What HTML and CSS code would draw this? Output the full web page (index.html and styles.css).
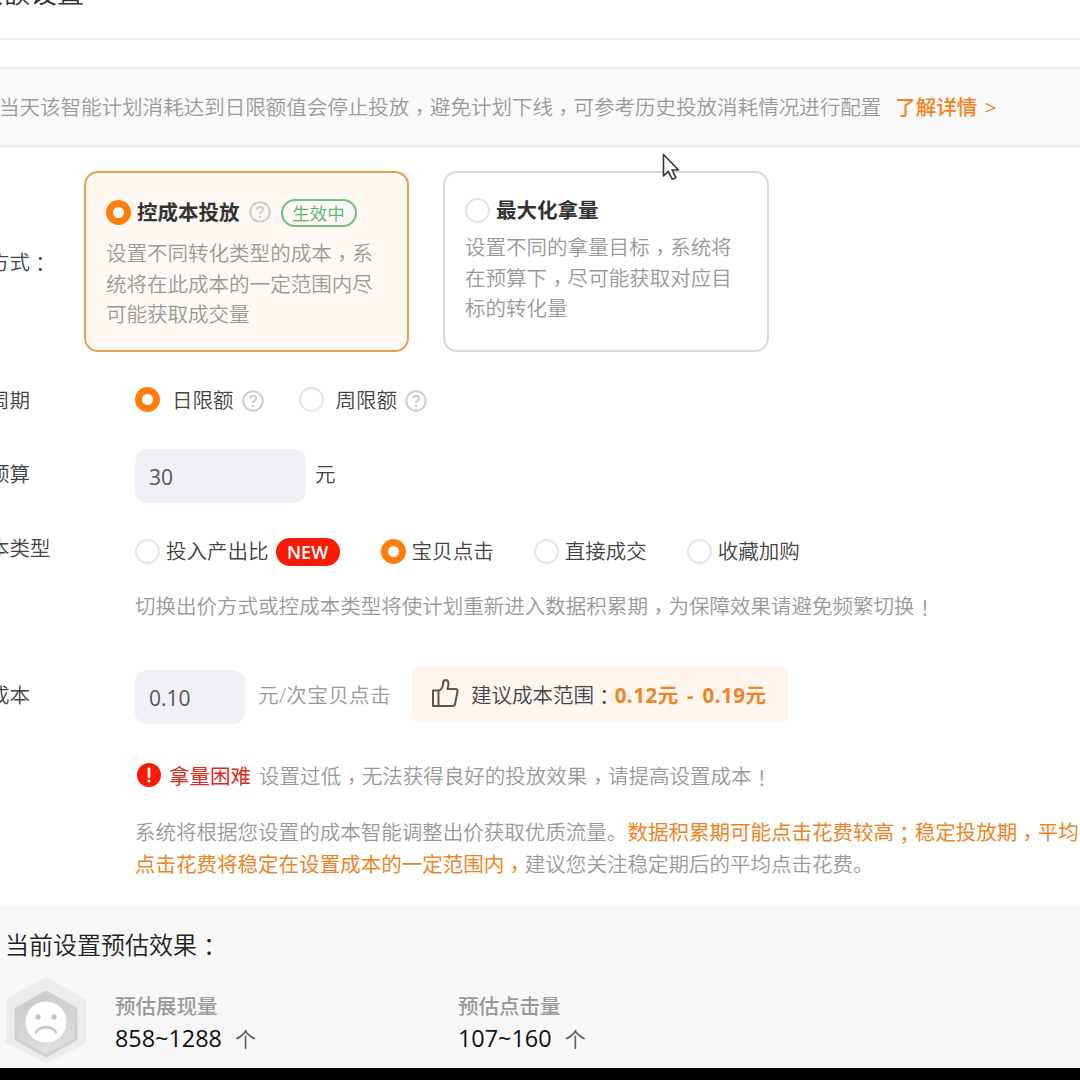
FILE: index.html
```html
<!DOCTYPE html>
<html lang="zh-CN">
<head>
    <meta charset="UTF-8">
    <meta name="viewport" content="width=device-width, initial-scale=1.0">
    <title>限额设置</title>
    <link rel="stylesheet" href="styles.css">
</head>
<body>
    <svg class="sprite" width="0" height="0">
        <symbol id="help" viewBox="0 0 22 22">
            <circle cx="11" cy="11" r="9.7" fill="none" stroke="currentColor" stroke-width="2"/>
            <path d="M8 8.7c0-1.9 1.3-3 3-3s3 1 3 2.7c0 2.2-3 2.3-3 4.6" fill="none" stroke="currentColor" stroke-width="2"/>
            <circle cx="11" cy="15.8" r="1.2" fill="currentColor"/>
        </symbol>
    </svg>

    <header class="header">
        <h1>限额设置</h1>
    </header>

    <div class="banner">
        <span>当天该智能计划消耗达到日限额值会停止投放<i>，</i>避免计划下线<i>，</i>可参考历史投放消耗情况进行配置</span>
        <a class="link">了解详情 &gt;</a>
    </div>

    <main class="form">
        <div class="row row-mode">
            <div class="label">方式<i class="mark">：</i></div>
            <div class="cards">
                <div class="card card-active">
                    <div class="card-title">
                        <span class="radio checked"></span>
                        <b>控成本投放</b>
                        <svg class="help"><use href="#help"/></svg>
                        <span class="tag">生效中</span>
                    </div>
                    <p>设置不同转化类型的成本<i>，</i>系统将在此成本的一定范围内尽可能获取成交量</p>
                </div>
                <div class="card">
                    <div class="card-title">
                        <span class="radio"></span>
                        <b>最大化拿量</b>
                    </div>
                    <p>设置不同的拿量目标<i>，</i>系统将在预算下<i>，</i>尽可能获取对应目标的转化量</p>
                </div>
            </div>
        </div>

        <div class="row row-cycle">
            <div class="label">周期</div>
            <div class="options">
                <label class="option"><span class="radio checked"></span>日限额<svg class="help"><use href="#help"/></svg></label>
                <label class="option"><span class="radio"></span>周限额<svg class="help"><use href="#help"/></svg></label>
            </div>
        </div>

        <div class="row row-budget">
            <div class="label">预算</div>
            <div class="input">30</div>
            <span class="unit">元</span>
        </div>

        <div class="row row-type">
            <div class="label">本类型</div>
            <div class="options">
                <label class="option"><span class="radio"></span>投入产出比<span class="new">NEW</span></label>
                <label class="option"><span class="radio checked"></span>宝贝点击</label>
                <label class="option"><span class="radio"></span>直接成交</label>
                <label class="option"><span class="radio"></span>收藏加购</label>
            </div>
        </div>
        <p class="hint">切换出价方式或控成本类型将使计划重新进入数据积累期<i>，</i>为保障效果请避免频繁切换<i class="mark">！</i></p>

        <div class="row row-cost">
            <div class="label">成本</div>
            <div class="input input-small">0.10</div>
            <span class="unit-gray">元/次宝贝点击</span>
            <div class="suggest">
                <svg class="thumb" viewBox="0 0 28 30">
                    <path d="M2 12.5h5.500V28H2zM7.500 12.500c3-.8 4.300-3 4.500-6.500.1-2.500.8-4 2.500-4 2.200 0 3 1.700 3 3.800 0 2-.5 3.600-1 5.200h8c1.500 0 2.300 1 2 2.500l-2.300 12c-.3 1.600-1.200 2.500-2.700 2.500h-14"/>
                </svg>
                <span>建议成本范围<i class="mark">：</i></span><b>0.12元 - 0.19元</b>
            </div>
        </div>

        <div class="warning">
            <svg class="alert" viewBox="0 0 24 24">
                <circle cx="12" cy="12" r="12" fill="#fb1a05"/>
                <path d="M12 5.500v8.500" stroke="#fff" stroke-width="2.600" stroke-linecap="round"/>
                <circle cx="12" cy="18" r="1.500" fill="#fff"/>
            </svg>
            <strong>拿量困难</strong>
            <span>设置过低<i>，</i>无法获得良好的投放效果<i>，</i>请提高设置成本<i class="mark">！</i></span>
        </div>

        <p class="desc">系统将根据您设置的成本智能调整出价获取优质流量。<em>数据积累期可能点击花费较高<i class="mark">；</i>稳定投放期<i>，</i>平均<br>点击花费将稳定在设置成本的一定范围内<i>，</i></em>建议您关注稳定期后的平均点击花费。</p>
    </main>

    <section class="estimate">
        <h2>当前设置预估效果<i class="mark">：</i></h2>
        <div class="stats">
            <svg class="face" viewBox="0 0 84 88">
                <defs>
                    <linearGradient id="hex" x1="0" y1="0" x2="0.3" y2="1">
                        <stop offset="0" stop-color="#c6c6c6"/>
                        <stop offset="1" stop-color="#dedede"/>
                    </linearGradient>
                </defs>
                <path d="M42 4 79 25V65L42 84 5 65V25z" fill="#ececec" stroke="#ececec" stroke-width="6" stroke-linejoin="round"/>
                <path d="M42 16 72 33V63L42 80 12 63V33z" fill="url(#hex)" stroke="#d0d0d0" stroke-width="3" stroke-linejoin="round"/>
                <circle cx="42" cy="46" r="20.500" fill="#fff"/>
                <circle cx="34" cy="41" r="2.700" fill="#c4c4c4"/>
                <circle cx="50" cy="41" r="2.700" fill="#c4c4c4"/>
                <path d="M32 56.500c4-7 16-7 20 0" fill="none" stroke="#c4c4c4" stroke-width="2.400" stroke-linecap="round"/>
            </svg>
            <div class="stat">
                <div class="stat-name">预估展现量</div>
                <div class="stat-value">858~1288<span>个</span></div>
            </div>
            <div class="stat">
                <div class="stat-name">预估点击量</div>
                <div class="stat-value">107~160<span>个</span></div>
            </div>
        </div>
    </section>
    <div class="bottom-bar"></div>

    <svg class="cursor" viewBox="0 0 18 28">
        <path d="M1.500 1.500v21.500l4.800-4.600 4 8 3.600-1.800-3.800-7.600h6.400z" fill="#fff" stroke="#333" stroke-width="1.600" stroke-linejoin="round"/>
    </svg>
</body>
</html>
```

FILE: styles.css
```css
* {
    box-sizing: border-box;
}
body {
    margin: 0;
    width: 1080px;
    height: 1080px;
    overflow: hidden;
    position: relative;
    background: #fff;
    color: #444;
    font-family: "Open Sans", "Noto Sans CJK SC", sans-serif;
    font-size: 20.52px;
    font-weight: 350;
    line-height: 30px;
    white-space: nowrap;
}
h1, h2, p {
    margin: 0;
    font-weight: 350;
}
em {
    font-style: normal;
}
/* centered full-width punctuation */
i {
    -webkit-locale: "zh-TW";
    font-family: "Noto Sans CJK TC", sans-serif;
    font-style: normal;
    line-height: 0;
    vertical-align: -5px;
}
i.mark {
    vertical-align: -2px;
}
.sprite {
    position: absolute;
}
.header {
    display: flex;
    height: 40px;
    border-bottom: 2px solid #eee;
}
.header h1 {
    margin: -27px 0 0 -24px;
    font-size: 27px;
    line-height: 40px;
    color: #333;
}
.banner {
    display: flex;
    align-items: center;
    gap: 14px;
    height: 80px;
    margin-top: 27px;
    border-top: 2px solid #eee;
    border-bottom: 2px solid #eee;
    background: #f9f9f9;
    color: #999;
}
.banner span {
    margin-left: -1px;
}
.link {
    color: #f78217;
    font-weight: 500;
    word-spacing: 2px;
}
.form {
    height: 759px;
    padding-top: 24px;
}
.row {
    display: flex;
    align-items: center;
}
.label {
    flex: none;
    width: 146px;
    margin-left: -11px;
}
.row-mode .label {
    width: 95px;
}
.cards {
    display: flex;
    gap: 34px;
}
.card {
    width: 326px;
    height: 181px;
    padding: 22px 20px;
    border: 2px solid #d9d9d9;
    border-radius: 14px;
    white-space: normal;
}
.card-active {
    width: 325px;
    padding-top: 24px;
    background: #fff8f3;
    border-color: #e5a050;
}
.card-title {
    display: flex;
    align-items: center;
    height: 30px;
    color: #333;
}
.card-title b {
    margin-left: 6px;
    font-weight: 600;
}
.card-title .help {
    margin-left: 9px;
}
.card p {
    margin-top: 7px;
    line-height: 30.700px;
    color: #999;
}
.card-active p {
    margin-top: 11px;
}
.radio {
    flex: none;
    width: 25px;
    height: 25px;
    border: 2px solid #e4e4e4;
    border-radius: 50%;
    background: #fff;
}
.radio.checked {
    border: 7px solid #ff7e0b;
}
.help {
    flex: none;
    width: 22px;
    height: 22px;
    color: #ccc;
}
.tag {
    width: 76px;
    height: 28px;
    margin: 2px 0 0 10px;
    border: 2px solid #6cc285;
    border-radius: 14px;
    color: #52b66c;
    font-size: 17.500px;
    line-height: 24px;
    text-align: center;
}
.options {
    display: flex;
}
.option {
    display: flex;
    align-items: center;
}
.row-cycle {
    height: 30px;
    margin-top: 33px;
}
.row-cycle .option {
    margin-right: 35px;
}
.row-cycle .radio {
    margin: -2px 12px 0 0;
}
.row-cycle .help {
    margin: 2px 0 0 8px;
}
.row-budget {
    height: 54px;
    margin-top: 34px;
}
.row-budget .label, .unit {
    margin-top: -4px;
}
.input {
    width: 171px;
    height: 54px;
    padding-left: 14px;
    border-radius: 12px;
    background: #f0f0f6;
    line-height: 56px;
    font-size: 21px;
    font-weight: 400;
    color: #555;
}
.input-small {
    width: 110px;
}
.unit {
    margin-left: 9px;
}
.row-type {
    height: 30px;
    margin-top: 33px;
}
.row-type .label {
    margin-top: -6px;
}
.row-type .option {
    margin-right: 40px;
}
.row-type .option:first-child {
    margin-right: 41px;
}
.row-type .radio {
    margin-right: 6px;
}
.new {
    width: 64px;
    height: 28px;
    margin: 2px 0 0 7px;
    border-radius: 14px;
    background: #fb1a05;
    color: #fff;
    font-size: 18px;
    font-weight: 600;
    line-height: 28px;
    text-align: center;
}
.hint {
    margin: 25px 0 0 135px;
    color: #999;
}
.row-cost {
    height: 54px;
    margin-top: 49px;
}
.row-cost .label {
    margin-top: -4px;
}
.unit-gray {
    width: 133px;
    margin: -4px 0 0 13px;
    color: #999;
    letter-spacing: 0.4px;
}
.suggest {
    display: flex;
    align-items: center;
    width: 376px;
    height: 54px;
    margin: -7px 0 0 21px;
    padding: 2px 0 0 19px;
    border-radius: 4px;
    background: #fff5ed;
}
.suggest span {
    margin-left: 12px;
}
.suggest b {
    color: #ee8423;
    font-weight: 700;
    letter-spacing: 0.5px;
    word-spacing: 2.500px;
}
.thumb {
    width: 28px;
    height: 30px;
    margin-top: -3px;
    fill: none;
    stroke: #555;
    stroke-width: 2;
    stroke-linejoin: round;
}
.warning {
    display: flex;
    align-items: center;
    margin: 37px 0 0 137px;
    color: #999;
}
.warning strong {
    margin: 0 8px;
    color: #dc2b1c;
    font-weight: 400;
}
.alert {
    width: 24px;
    height: 24px;
    margin-top: -2px;
}
.desc {
    margin: 25px 0 0 135px;
    line-height: 32px;
    color: #999;
}
.desc em {
    color: #f08424;
    font-weight: 400;
}
.estimate {
    height: 162px;
    padding: 21px 0 0 5px;
    background: #f7f7f7;
}
.estimate h2 {
    font-size: 24px;
    line-height: 36px;
    color: #222;
}
.stats {
    display: flex;
    margin-top: 13px;
}
.face {
    width: 84px;
    height: 88px;
    margin-left: -1px;
}
.stat {
    width: 343px;
    margin: 15px 0 0;
    padding-left: 27px;
}
.stat-name {
    color: #999;
    font-weight: 500;
}
.stat-value {
    line-height: 34px;
    font-size: 23.400px;
    font-weight: 500;
    color: #111;
}
.stat-value span {
    margin-left: 13px;
    font-size: 21px;
    font-weight: 350;
    color: #555;
}
.bottom-bar {
    height: 12px;
    background: #000;
}
.cursor {
    position: absolute;
    left: 662px;
    top: 153px;
    width: 18px;
    height: 28px;
}
```
